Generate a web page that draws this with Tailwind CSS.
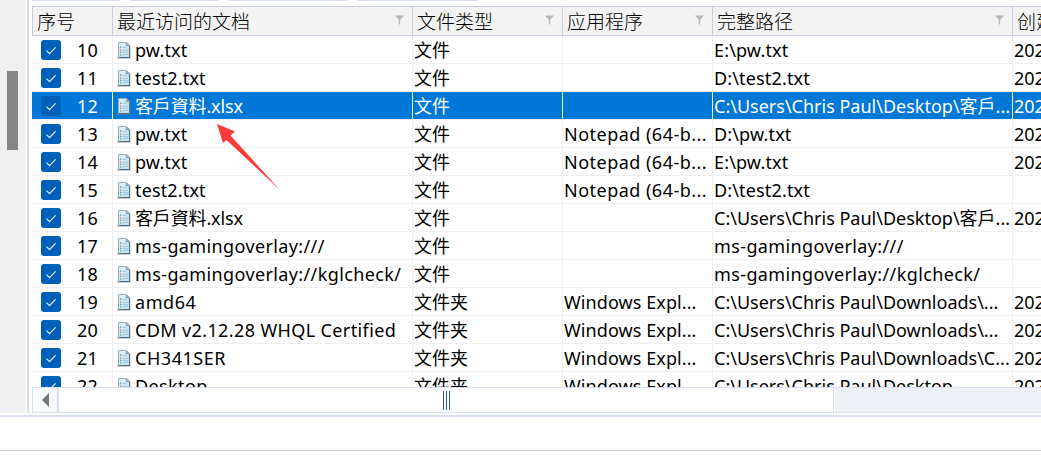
<!DOCTYPE html>
<html lang="zh-CN">
<head>
<meta charset="utf-8">
<title>最近访问的文档</title>
<script src="https://cdn.jsdelivr.net/npm/@tailwindcss/browser@4"></script>
</head>
<body class="w-[1041px] h-[461px] overflow-hidden bg-white font-['Noto_Sans','Noto_Sans_CJK_SC',sans-serif] text-black">
<svg class="absolute w-0 h-0">
  <defs>
    <linearGradient id="pg" x1="0" y1="0" x2="1" y2="1"><stop offset="0" stop-color="#e4f1f4"/><stop offset="1" stop-color="#b8dcee"/></linearGradient>
  </defs>
  <symbol id="check" viewBox="0 0 20 20"><path d="M5.5 10.6l3 3L14.6 7.4" fill="none" stroke="#e4f0fa" stroke-width="1.15"/></symbol>
  <symbol id="doc" viewBox="0 0 14 17">
    <path d="M0 15.9h13.5" stroke="#8d959b"/>
    <path d="M1.5.5h8.2l3 3v12H1.5z" fill="url(#pg)" stroke="#9aabb5"/>
    <path d="M12.6 4v11.5H2" fill="none" stroke="#50697a"/>
    <path d="M9.3.8v3.2h3.2z" fill="#9eb0bb" stroke="#8496a0" stroke-width=".6"/>
    <path d="M5.5 5.5h4M5.5 8.5h5.5M5.5 10.5h5.5M5.5 12.5h5.5" stroke="#9fc0ce" stroke-width=".8"/>
    <path d="M3 5.2h1.3" stroke="#3aa84a" stroke-width="1.2"/><path d="M3 8h1.3" stroke="#d85050" stroke-width="1.2"/><path d="M3 10.3h1.3" stroke="#3d86cc" stroke-width="1.2"/><path d="M3 12.8h1.3" stroke="#57a860" stroke-width="1.2"/>
  </symbol>
  <symbol id="filter" viewBox="0 0 9 10"><path d="M0 .5h9L5.2 4.7V9.5H3.8V4.7z" fill="#b8b8b8"/></symbol>
</svg>
<div class="flex h-[413px]">
  <aside class="w-[25px] bg-[#f0f0f0] pl-[7px] pt-[71px]"><div class="w-[11px] h-[79px] bg-[#858585]"></div></aside>
  <main class="ml-[2px] w-[1014px] border-l-2 border-[#d6e0f2] pl-[3px] flex flex-col">
    <div class="flex h-[6px] shrink-0 gap-[10px]">
      <i class="w-[88px] h-px bg-[#d6e0f2]"></i><i class="w-[88px] h-px bg-[#d6e0f2]"></i><i class="w-[120px] h-px bg-[#d6e0f2]"></i><i class="w-[120px] h-px bg-[#d6e0f2]"></i>
    </div>
    <div class="flex h-[30px] shrink-0 w-[1009px] overflow-hidden bg-[#f3f3f3] border-y border-l border-[#ccccdf] text-[19px] leading-[30px] text-black whitespace-nowrap font-light">
      <div class="w-[80px] shrink-0 border-r border-[#ccccdf] pl-[4px]">序号</div>
      <div class="w-[300px] shrink-0 border-r border-[#ccccdf] pl-[4px] pr-[8px] flex justify-between">最近访问的文档<svg class="w-[9px] h-[10px] mt-[8px]"><use href="#filter"/></svg></div>
      <div class="w-[150px] shrink-0 border-r border-[#ccccdf] pl-[4px] pr-[8px] flex justify-between">文件类型<svg class="w-[9px] h-[10px] mt-[8px]"><use href="#filter"/></svg></div>
      <div class="w-[150px] shrink-0 border-r border-[#ccccdf] pl-[4px] pr-[8px] flex justify-between">应用程序<svg class="w-[9px] h-[10px] mt-[8px]"><use href="#filter"/></svg></div>
      <div class="w-[300px] shrink-0 border-r border-[#ccccdf] pl-[4px] pr-[8px] flex justify-between">完整路径<svg class="w-[9px] h-[10px] mt-[8px]"><use href="#filter"/></svg></div>
      <div class="shrink-0 pl-[4px]">创建</div>
    </div>
    <div id="rows" class="h-[351px] shrink-0 overflow-hidden text-[18px]"></div>
    <div class="flex h-[26px] shrink-0 border-y border-l border-[#d6e0f2]">
      <div class="w-[26px] bg-[#f8f9fc] border-r-2 border-[#d6e0f2] flex items-center pl-[9px]"><svg class="w-[8px] h-[14px]" viewBox="0 0 8 14"><path d="M0 7l7-7v14z" fill="#777"/></svg></div>
      <div class="w-[775px] border-r border-[#d6e0f2] flex items-center justify-center gap-[2px] pt-[1px]"><i class="w-px h-[19px] bg-[#2458a0]"></i><i class="w-px h-[19px] bg-[#2458a0]"></i><i class="w-px h-[19px] bg-[#2458a0]"></i></div>
      <div class="flex-1 ml-px bg-[#eef1f7]"></div>
    </div>
  </main>
</div>
<div class="mt-[2px] h-[36px] border-t-2 border-t-[#d6e0f2] border-b border-b-[#ccccdc]"></div>
<svg class="absolute left-[216px] top-[123px] w-[64px] h-[67px]" viewBox="216 123 64 67"><path d="M217 124l18 7.5-4.5 4 49 54-53-49.5-3.5 3z" fill="#fb3a3a"/></svg>
<script>
const S='tracking-[0.15px]',M='tracking-[0.38px]',L='tracking-[0.55px]',N='tracking-[-0.15px]',Z='tracking-[0px]';
const data=[
[10,'pw.txt','文件','','E:\\pw.txt',1,S,S],
[11,'test2.txt','文件','','D:\\test2.txt',1,S,S],
[12,'客戶資料.xlsx','文件','','C:\\Users\\Chris Paul\\Desktop\\客戶...',1,N,Z],
[13,'pw.txt','文件','Notepad (64-b...','D:\\pw.txt',1,S,S],
[14,'pw.txt','文件','Notepad (64-b...','E:\\pw.txt',1,S,S],
[15,'test2.txt','文件','Notepad (64-b...','D:\\test2.txt',0,S,S],
[16,'客戶資料.xlsx','文件','','C:\\Users\\Chris Paul\\Desktop\\客戶...',1,N,Z],
[17,'ms-gamingoverlay:///','文件','','ms-gamingoverlay:///',0,M,M],
[18,'ms-gamingoverlay://kglcheck/','文件','','ms-gamingoverlay://kglcheck/',0,M,M],
[19,'amd64','文件夹','Windows Expl...','C:\\Users\\Chris Paul\\Downloads\\...',1,L,Z],
[20,'CDM v2.12.28 WHQL Certified','文件夹','Windows Expl...','C:\\Users\\Chris Paul\\Downloads\\...',1,M,Z],
[21,'CH341SER','文件夹','Windows Expl...','C:\\Users\\Chris Paul\\Downloads\\C...',1,L,Z],
[22,'Desktop','文件夹','Windows Expl...','C:\\Users\\Chris Paul\\Desktop',1,M,Z]];
const cell='shrink-0 border-r border-[#efefef] pl-px overflow-hidden';
document.getElementById('rows').innerHTML=data.map(r=>{
 const sel=r[0]===12;
 return `<div class="flex h-[28px] w-[1009px] overflow-hidden border-b border-[#efefef] leading-[28px] whitespace-pre ${sel?'bg-[#0078d7] text-white':''}">
 <div class="w-[81px] shrink-0 border-r border-[#efefef] flex pl-[9px]"><svg class="w-[20px] h-[20px] mt-[4px] rounded-[3px] shrink-0 bg-[#005fb8]"><use href="#check"/></svg><span class="ml-[16px] tracking-[0.3px]">${r[0]}</span></div>
 <div class="w-[300px] ${cell} flex"><svg class="w-[14px] h-[17px] mt-[6px] ml-[3px] mr-[4px] shrink-0"><use href="#doc"/></svg><span class="${r[6]}">${r[1]}</span></div>
 <div class="w-[150px] ${cell}">${r[2]}</div>
 <div class="w-[150px] ${cell} ${r[3][0]==='N'?'tracking-[0.48px]':'tracking-[0.08px]'}">${r[3]}</div>
 <div class="w-[300px] ${cell} ${r[7]}">${r[4]}</div>
 <div class="shrink-0 pl-px">${r[5]?'202':''}</div></div>`}).join('');
</script>
</body>
</html>
